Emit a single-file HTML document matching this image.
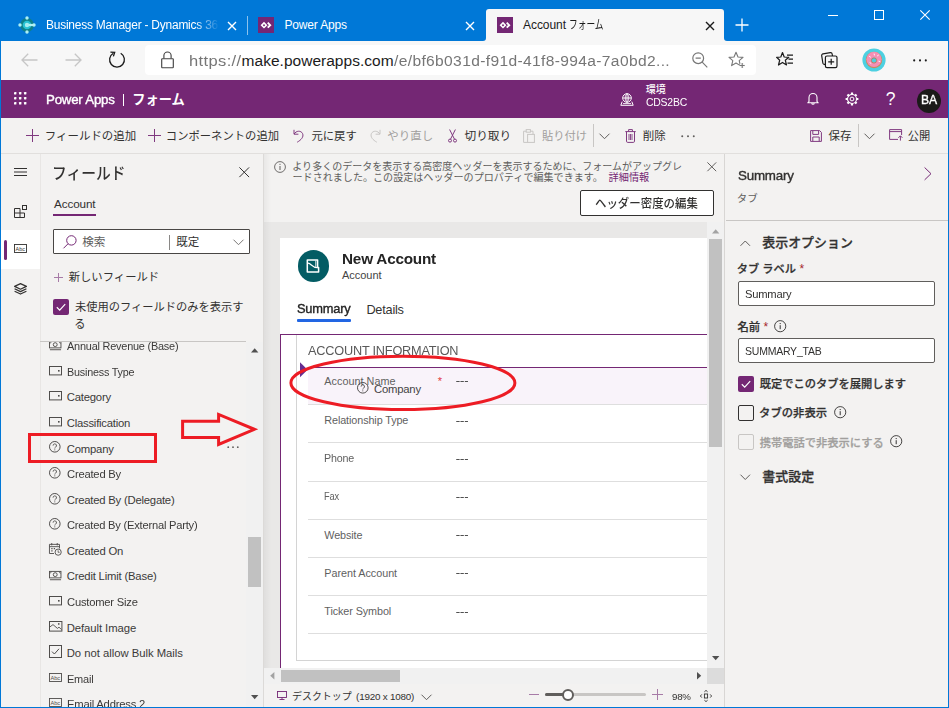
<!DOCTYPE html>
<html lang="ja"><head><meta charset="utf-8"><title>Account フォーム - Power Apps</title><style>
html,body{margin:0;padding:0;background:#0078d7;}
body{width:949px;height:708px;overflow:hidden;position:relative;font-family:"Liberation Sans",sans-serif;}
#w{position:absolute;left:0;top:0;width:949px;height:708px;overflow:hidden;}
.b,.t,.i,.j{position:absolute;}
.t{white-space:nowrap;}
.j,.i{overflow:visible;display:block;}
.jp{font-family:"Liberation Sans","Noto Sans CJK JP",sans-serif;}
</style></head><body><div id="w">
<div class="b" style="left:0px;top:0px;width:949px;height:708px;background:#0078d7;"></div>
<svg class="i" style="left:480px;top:9px" width="250" height="32" viewBox="480 9 250 32"><path d="M483 41 Q486 41 486 38 V12 Q486 9 489 9 H721 Q724 9 724 12 V38 Q724 41 727 41 Z" fill="#f7f7f7"/></svg>
<div class="b" style="left:1px;top:41px;width:947px;height:39px;background:#f7f7f7;"></div>
<svg class="i" style="left:18px;top:16px" width="18" height="18" viewBox="0 0 18 18" ><circle cx="9" cy="9" r="6.9" fill="#0e7f89"/><circle cx="9" cy="9" r="4.3" fill="#27c2d3"/><circle cx="9" cy="2" r="1.7" fill="#aef0f3"/><circle cx="9" cy="16" r="1.7" fill="#aef0f3"/><circle cx="2" cy="9" r="1.7" fill="#aef0f3"/><circle cx="16" cy="9" r="1.7" fill="#aef0f3"/><path d="M9 9 H16" stroke="#aef0f3" stroke-width="2.2"/><circle cx="9" cy="9" r="2.2" fill="#a5edf1"/></svg>
<div class="t" style="left:45.50px;top:16.10px;font-size:12px;line-height:18px;color:#ffffff;letter-spacing:-0.220px;transform:scaleX(0.9953);transform-origin:0 50%;width:174px;overflow:hidden;-webkit-mask-image:linear-gradient(90deg,#000 86%,transparent 100%);">Business Manager - Dynamics 36</div>
<svg class="i" style="left:227px;top:20.5px" width="10" height="10" viewBox="0 0 10 10" ><path d="M1 1 L9 9 M9 1 L1 9" stroke="#fff" stroke-width="1.4" fill="none"/></svg>
<div class="b" style="left:247px;top:16px;width:1px;height:19px;background:rgba(255,255,255,0.55);"></div>
<svg class="i" style="left:258px;top:17px" width="16" height="16" viewBox="0 0 16 16" ><rect width="16" height="16" fill="#742774"/><path d="M2.6 8.2 L6 4.8 L9.4 8.2 L6 11.6 Z M4.8 8.2 L6 9.4 L7.2 8.2 L6 7 Z" fill="#fff" fill-rule="evenodd"/><path d="M9.7 5.7 L12.2 8.2 L9.7 10.7" stroke="#fff" stroke-width="1.9" fill="none"/></svg>
<div class="t" style="left:284.40px;top:16.10px;font-size:12px;line-height:18px;color:#ffffff;letter-spacing:-0.154px;">Power Apps</div>
<svg class="i" style="left:465px;top:20.5px" width="10" height="10" viewBox="0 0 10 10" ><path d="M1 1 L9 9 M9 1 L1 9" stroke="#fff" stroke-width="1.4" fill="none"/></svg>
<svg class="i" style="left:497px;top:17px" width="16" height="16" viewBox="0 0 16 16" ><rect width="16" height="16" fill="#742774"/><path d="M2.6 8.2 L6 4.8 L9.4 8.2 L6 11.6 Z M4.8 8.2 L6 9.4 L7.2 8.2 L6 7 Z" fill="#fff" fill-rule="evenodd"/><path d="M9.7 5.7 L12.2 8.2 L9.7 10.7" stroke="#fff" stroke-width="1.9" fill="none"/></svg>
<div class="t" style="left:523.00px;top:16.10px;font-size:12px;line-height:18px;color:#1b1b1b;letter-spacing:-0.051px;">Account</div>
<div class="t jp" style="left:568.74px;top:17.26px;font-size:12px;line-height:16.8px;color:#1b1b1b;transform:scaleX(0.726);transform-origin:0 50%;">フォーム</div>
<svg class="i" style="left:704.5px;top:20.5px" width="10" height="10" viewBox="0 0 10 10" ><path d="M1 1 L9 9 M9 1 L1 9" stroke="#1b1b1b" stroke-width="1.4" fill="none"/></svg>
<svg class="i" style="left:735px;top:18px" width="14" height="14" viewBox="0 0 14 14" ><path d="M7 0.5 V13.5 M0.5 7 H13.5" stroke="#fff" stroke-width="1.3" fill="none"/></svg>
<div class="b" style="left:828px;top:15px;width:10px;height:1px;background:#fff;"></div>
<div class="b" style="left:874px;top:10px;width:10px;height:10px;border:1px solid #fff;box-sizing:border-box;"></div>
<svg class="i" style="left:920px;top:10px" width="10" height="10" viewBox="0 0 10 10" ><path d="M0.3 0.3 L9.7 9.7 M9.7 0.3 L0.3 9.7" stroke="#fff" stroke-width="1.1" fill="none"/></svg>
<svg class="i" style="left:21px;top:53px" width="17" height="14" viewBox="0 0 17 14" ><path d="M16.5 7 H1.2 M7.2 0.8 L1 7 L7.2 13.2" stroke="#c6c6c6" stroke-width="1.3" fill="none"/></svg>
<svg class="i" style="left:64.5px;top:53px" width="17" height="14" viewBox="0 0 17 14" ><path d="M0.5 7 H15.8 M9.8 0.8 L16 7 L9.8 13.2" stroke="#c6c6c6" stroke-width="1.3" fill="none"/></svg>
<svg class="i" style="left:108px;top:51px" width="18" height="18" viewBox="0 0 18 18" ><path d="M12.7 2.3 A7.4 7.4 0 1 1 5.3 2.3" stroke="#1b1b1b" stroke-width="1.3" fill="none"/><path d="M2.4 1.1 L6.7 1.3 L5.4 5.4" stroke="#1b1b1b" stroke-width="1.3" fill="none" stroke-linejoin="miter"/></svg>
<div class="b" style="left:145px;top:44.5px;width:611px;height:30.5px;background:#ffffff;border-radius:4px;"></div>
<svg class="i" style="left:161px;top:51px" width="13" height="18" viewBox="0 0 13 18" ><rect x="0.7" y="7.7" width="11.6" height="9" rx="0.6" stroke="#444" stroke-width="1.15" fill="none"/><path d="M2.9 7.5 V4.6 A3.6 3.6 0 0 1 10.1 4.6 V7.5" stroke="#444" stroke-width="1.15" fill="none"/></svg>
<div class="t" style="left:188.50px;top:49.13px;font-size:15.5px;line-height:23px;color:#767676;letter-spacing:0.350px;transform:scaleX(1.0644);transform-origin:0 50%;">https://</div>
<div class="t" style="left:241.60px;top:49.13px;font-size:15.5px;line-height:23px;color:#1b1b1b;letter-spacing:0.021px;">make.powerapps.com</div>
<div class="t" style="left:394.20px;top:49.13px;font-size:15.5px;line-height:23px;color:#767676;letter-spacing:0.350px;transform:scaleX(1.0051);transform-origin:0 50%;">/e/bf6b031d-f91d-41f8-994a-7a0bd2...</div>
<svg class="i" style="left:692px;top:52px" width="16" height="16" viewBox="0 0 16 16" ><circle cx="6.2" cy="6.2" r="5.4" stroke="#777" stroke-width="1.2" fill="none"/><path d="M10.2 10.2 L15.3 15.3 M3.6 6.2 H8.8" stroke="#777" stroke-width="1.2" fill="none"/></svg>
<svg class="i" style="left:728px;top:51px" width="18" height="18" viewBox="0 0 18 18" ><path d="M8 1.2 L10 6 L15 6.4 L11.2 9.7 L12.4 14.6 L8 12 L3.6 14.6 L4.8 9.7 L1 6.4 L6 6 Z" stroke="#777" stroke-width="1.1" fill="none" stroke-linejoin="round"/><path d="M14.2 12 V17 M11.7 14.5 H16.7" stroke="#f7f7f7" stroke-width="3.2"/><path d="M14.2 12 V17 M11.7 14.5 H16.7" stroke="#777" stroke-width="1.1"/></svg>
<svg class="i" style="left:776px;top:51px" width="18" height="18" viewBox="0 0 18 18" ><path d="M6.5 1.5 L8.2 6 L12.8 6.3 L9.3 9.2 L10.5 14 L6.5 11.4 L2.5 14 L3.7 9.2 L0.6 6.3 L4.8 6 Z" stroke="#1b1b1b" stroke-width="1.2" fill="none" stroke-linejoin="round"/><path d="M11 4.2 H17 M12.5 8.2 H17 M11.5 12.2 H17" stroke="#1b1b1b" stroke-width="1.2"/></svg>
<svg class="i" style="left:821px;top:51px" width="17" height="18" viewBox="0 0 17 18" ><rect x="1.2" y="2.2" width="10.6" height="10.6" rx="1.6" stroke="#1b1b1b" stroke-width="1.2" fill="none" transform="rotate(-9 6.5 7.5)"/><rect x="4.4" y="5" width="11.6" height="11.6" rx="1.6" stroke="#1b1b1b" stroke-width="1.2" fill="#f7f7f7"/><path d="M10.2 7.8 V13.8 M7.2 10.8 H13.2" stroke="#1b1b1b" stroke-width="1.2"/></svg>
<svg class="i" style="left:862px;top:48px" width="24" height="24" viewBox="0 0 24 24" ><circle cx="12" cy="12" r="11.6" fill="#4dd0e1"/><circle cx="12" cy="12" r="8.2" fill="#c98a5a"/><circle cx="12" cy="11.3" r="7.6" fill="#f58fb5"/><circle cx="12" cy="12" r="2.6" fill="#4dd0e1"/><circle cx="12" cy="12.5" r="2.6" fill="none" stroke="#b87a4d" stroke-width="0.8"/><path d="M7.5 8.5 l1 .6 M15.5 7.8 l.9 -.6 M16.8 13.2 l1 .3 M8 14.8 l.9 .5 M12.2 6 l.2 1" stroke="#fff" stroke-width="0.9" stroke-linecap="round"/></svg>
<svg class="i" style="left:913px;top:58.6px" width="14" height="3" viewBox="0 0 14 3" ><circle cx="1.2" cy="1.4" r="1.05" fill="#1b1b1b"/><circle cx="7" cy="1.4" r="1.05" fill="#1b1b1b"/><circle cx="12.8" cy="1.4" r="1.05" fill="#1b1b1b"/></svg>
<div class="b" style="left:1px;top:80px;width:947px;height:37.5px;background:#742774;"></div>
<svg class="i" style="left:13.7px;top:92px" width="12.4" height="12.4" viewBox="0 0 12.4 12.4" ><rect x="0" y="0" width="2.4" height="2.4" rx="0.5" fill="#fff"/><rect x="0" y="5" width="2.4" height="2.4" rx="0.5" fill="#fff"/><rect x="0" y="10" width="2.4" height="2.4" rx="0.5" fill="#fff"/><rect x="5" y="0" width="2.4" height="2.4" rx="0.5" fill="#fff"/><rect x="5" y="5" width="2.4" height="2.4" rx="0.5" fill="#fff"/><rect x="5" y="10" width="2.4" height="2.4" rx="0.5" fill="#fff"/><rect x="10" y="0" width="2.4" height="2.4" rx="0.5" fill="#fff"/><rect x="10" y="5" width="2.4" height="2.4" rx="0.5" fill="#fff"/><rect x="10" y="10" width="2.4" height="2.4" rx="0.5" fill="#fff"/></svg>
<div class="t" style="left:46.30px;top:89.81px;font-size:13.5px;line-height:20px;color:#ffffff;-webkit-text-stroke:0.38px #ffffff;letter-spacing:-0.220px;transform:scaleX(0.9836);transform-origin:0 50%;">Power Apps</div>
<div class="b" style="left:122.6px;top:94px;width:1.8px;height:12.4px;background:#ffffff;"></div>
<div class="t jp" style="left:132.29px;top:90.83px;font-size:13.2px;line-height:18.7px;color:#ffffff;font-weight:bold;">フォーム</div>
<svg class="i" style="left:620px;top:93px" width="14" height="13" viewBox="0 0 14 13" ><circle cx="7" cy="5" r="4.3" stroke="#fff" stroke-width="1" fill="none"/><path d="M2.7 5 H11.3 M7 0.7 V9.3 M7 0.7 C4.6 2.6 4.6 7.4 7 9.3 M7 0.7 C9.4 2.6 9.4 7.4 7 9.3" stroke="#fff" stroke-width="0.9" fill="none"/><path d="M2.2 8.6 L0.8 12.3 H13.2 L11.8 8.6" stroke="#fff" stroke-width="1" fill="none"/><path d="M3 10.6 H11" stroke="#fff" stroke-width="0.9"/></svg>
<div class="t jp" style="left:645.71px;top:82.60px;font-size:10px;line-height:14px;color:#ffffff;font-weight:500;">環境</div>
<div class="t" style="left:646.00px;top:94.29px;font-size:10.56px;line-height:16px;color:#ffffff;letter-spacing:-0.220px;transform:scaleX(0.9875);transform-origin:0 50%;">CDS2BC</div>
<svg class="i" style="left:807px;top:92px" width="12" height="13" viewBox="0 0 12 13" ><path d="M2 9.5 V5.5 A4 4 0 0 1 10 5.5 V9.5 L11.2 10.8 H0.8 Z" stroke="#fff" stroke-width="1.1" fill="none" stroke-linejoin="round"/><path d="M4.6 11.2 A1.5 1.5 0 0 0 7.4 11.2" stroke="#fff" stroke-width="1.1" fill="none"/></svg>
<svg class="i" style="left:844.5px;top:91.5px" width="14" height="14" viewBox="0 0 14 14" ><circle cx="7" cy="7" r="4.5" stroke="#fff" stroke-width="1.1" fill="none"/><circle cx="7" cy="7" r="1.9" stroke="#fff" stroke-width="1" fill="none"/><path d="M11.60 7.00 L13.40 7.00 M10.25 10.25 L11.53 11.53 M7.00 11.60 L7.00 13.40 M3.75 10.25 L2.47 11.53 M2.40 7.00 L0.60 7.00 M3.75 3.75 L2.47 2.47 M7.00 2.40 L7.00 0.60 M10.25 3.75 L11.53 2.47" stroke="#fff" stroke-width="2.2"/></svg>
<div class="t" style="left:885.80px;top:86.35px;font-size:17.5px;line-height:26px;color:#ffffff;">?</div>
<div class="b" style="left:916.5px;top:88.5px;width:24px;height:24px;background:#1b1a19;border-radius:12px;"></div>
<div class="t" style="left:920.60px;top:91.21px;font-size:12.5px;line-height:19px;color:#ffffff;-webkit-text-stroke:0.35px #ffffff;letter-spacing:-0.220px;transform:scaleX(0.9732);transform-origin:0 50%;">BA</div>
<div class="b" style="left:1px;top:117.5px;width:947px;height:36px;background:#f3f2f1;"></div>
<div class="b" style="left:1px;top:153px;width:947px;height:1px;background:#e1dfdd;"></div>
<svg class="i" style="left:26px;top:129px" width="13" height="13" viewBox="0 0 13 13" ><path d="M6.5 0 V13 M0 6.5 H13" stroke="#803a80" stroke-width="1" fill="none"/></svg>
<div class="t jp" style="left:44.84px;top:127.81px;font-size:11.46px;line-height:16.3px;color:#323130;">フィールドの追加</div>
<svg class="i" style="left:148px;top:129px" width="13" height="13" viewBox="0 0 13 13" ><path d="M6.5 0 V13 M0 6.5 H13" stroke="#803a80" stroke-width="1" fill="none"/></svg>
<div class="t jp" style="left:165.80px;top:127.89px;font-size:11.33px;line-height:16.1px;color:#323130;">コンポーネントの追加</div>
<svg class="i" style="left:292.5px;top:128.5px" width="11" height="14" viewBox="0 0 11 14" ><path d="M1 0.8 V5.2 H5.4" stroke="#803a80" stroke-width="1" fill="none"/><path d="M1.2 5 C3 1.6 8 1.2 9.6 4.6 C11 8 8 11 4.2 13.2" stroke="#803a80" stroke-width="1" fill="none"/></svg>
<div class="t jp" style="left:311.46px;top:127.89px;font-size:11.34px;line-height:16.1px;color:#323130;">元に戻す</div>
<svg class="i" style="left:369px;top:128.5px" width="12" height="14" viewBox="0 0 12 14" ><path d="M11 0.8 V5.2 H6.6" stroke="#c8c6c4" stroke-width="1" fill="none"/><path d="M10.8 5 C9 1.6 4 1.2 2.4 4.6 C1 8 4 11 7.8 13.2" stroke="#c8c6c4" stroke-width="1" fill="none"/></svg>
<div class="t jp" style="left:387.31px;top:127.80px;font-size:11.46px;line-height:16.3px;color:#a19f9d;">やり直し</div>
<svg class="i" style="left:447.5px;top:128.5px" width="9" height="14" viewBox="0 0 9 14" ><path d="M1.6 0.5 L6.4 10 M7.4 0.5 L2.6 10" stroke="#803a80" stroke-width="1" fill="none"/><circle cx="2" cy="11.6" r="1.5" stroke="#803a80" stroke-width="1" fill="none"/><circle cx="7" cy="11.6" r="1.5" stroke="#803a80" stroke-width="1" fill="none"/></svg>
<div class="t jp" style="left:464.46px;top:127.65px;font-size:11.69px;line-height:16.6px;color:#323130;">切り取り</div>
<svg class="i" style="left:522.5px;top:128.5px" width="12" height="14" viewBox="0 0 12 14" ><path d="M3.2 2.2 H0.6 V13.4 H4.6 M7.4 2.2 H10 V5" stroke="#c8c6c4" stroke-width="1" fill="none"/><rect x="3.2" y="0.6" width="4.2" height="2.6" stroke="#c8c6c4" stroke-width="1" fill="none"/><rect x="4.6" y="5.4" width="6.8" height="8" stroke="#c8c6c4" stroke-width="1" fill="none"/></svg>
<div class="t jp" style="left:541.93px;top:127.90px;font-size:11.31px;line-height:16.1px;color:#a19f9d;">貼り付け</div>
<div class="b" style="left:592.5px;top:124px;width:1px;height:23px;background:#c8c6c4;"></div>
<svg class="i" style="left:599.4px;top:133px" width="11" height="7" viewBox="0 0 11 7" ><path d="M0.5 0.7 L5.5 5.7 L10.5 0.7" stroke="#605e5c" stroke-width="1" fill="none"/></svg>
<svg class="i" style="left:624.5px;top:128.5px" width="11" height="14" viewBox="0 0 11 14" ><path d="M0.3 2.6 H10.7 M3.6 2.4 V0.6 H7.4 V2.4" stroke="#803a80" stroke-width="1" fill="none"/><path d="M1.5 2.8 V12.2 A1.2 1.2 0 0 0 2.7 13.4 H8.3 A1.2 1.2 0 0 0 9.5 12.2 V2.8" stroke="#803a80" stroke-width="1" fill="none"/><path d="M4 5 V11 M5.5 5 V11 M7 5 V11" stroke="#803a80" stroke-width="0.9"/></svg>
<div class="t jp" style="left:642.72px;top:127.78px;font-size:11.5px;line-height:16.3px;color:#323130;">削除</div>
<svg class="i" style="left:681px;top:135px" width="14" height="2.4" viewBox="0 0 14 2.4" ><circle cx="1.2" cy="1.2" r="1" fill="#605e5c"/><circle cx="7" cy="1.2" r="1" fill="#605e5c"/><circle cx="12.8" cy="1.2" r="1" fill="#605e5c"/></svg>
<svg class="i" style="left:810px;top:129.5px" width="12" height="12" viewBox="0 0 12 12" ><path d="M0.6 0.6 H9.6 L11.4 2.4 V11.4 H0.6 Z" stroke="#803a80" stroke-width="1" fill="none"/><path d="M2.8 0.8 V4.4 H8.6 V0.8 M2.8 11.2 V7 H9.2 V11.2" stroke="#803a80" stroke-width="1" fill="none"/></svg>
<div class="t jp" style="left:828.54px;top:127.79px;font-size:11.48px;line-height:16.3px;color:#323130;">保存</div>
<div class="b" style="left:857.5px;top:124px;width:1px;height:23px;background:#c8c6c4;"></div>
<svg class="i" style="left:864.4px;top:133px" width="11" height="7" viewBox="0 0 11 7" ><path d="M0.5 0.7 L5.5 5.7 L10.5 0.7" stroke="#605e5c" stroke-width="1" fill="none"/></svg>
<svg class="i" style="left:889px;top:129px" width="14" height="12" viewBox="0 0 14 12" ><path d="M9 10.4 H0.6 V0.6 H12.6 V6" stroke="#803a80" stroke-width="1" fill="none"/><path d="M0.6 2.6 H12.6" stroke="#803a80" stroke-width="1"/><path d="M11.4 11.6 V7 M9.4 8.8 L11.4 6.8 L13.4 8.8" stroke="#803a80" stroke-width="1" fill="none"/></svg>
<div class="t jp" style="left:907.74px;top:127.94px;font-size:11.25px;line-height:16px;color:#323130;">公開</div>
<div class="b" style="left:1px;top:154px;width:947px;height:553px;background:#f3f2f1;"></div>
<div class="b" style="left:1px;top:154px;width:39px;height:553px;background:#f3f2f1;"></div>
<div class="b" style="left:40px;top:154px;width:224px;height:553px;background:#f3f2f1;"></div>
<div class="b" style="left:39.5px;top:154px;width:1px;height:553px;background:#e8e6e4;"></div>
<div class="b" style="left:263px;top:154px;width:1px;height:553px;background:#dcdad8;"></div>
<svg class="i" style="left:14px;top:167.5px" width="13" height="8" viewBox="0 0 13 8" ><path d="M0 0.5 H13 M0 4 H13 M0 7.5 H13" stroke="#323130" stroke-width="1"/></svg>
<svg class="i" style="left:14px;top:205px" width="13" height="13" viewBox="0 0 13 13" ><path d="M0.5 3.5 H6 V12.5 H0.5 Z M0.5 8 H6 M6 8 H10.5 V12.5 H6" stroke="#323130" stroke-width="1" fill="none"/><rect x="8.5" y="0.5" width="4" height="4" stroke="#323130" stroke-width="1" fill="none"/></svg>
<div class="b" style="left:1px;top:230px;width:38.5px;height:39px;background:#ffffff;"></div>
<div class="b" style="left:4px;top:240px;width:3px;height:19.5px;background:#742774;border-radius:1.5px;"></div>
<svg class="i" style="left:13.8px;top:243.7px" width="13" height="9" viewBox="0 0 13 9" ><rect x="0.5" y="0.5" width="12" height="8" stroke="#323130" stroke-width="0.9" fill="none"/><text x="1.6" y="6.5" font-family="Liberation Sans, sans-serif" font-size="5.4" fill="#323130">Abc</text></svg>
<svg class="i" style="left:14px;top:282.5px" width="13" height="12" viewBox="0 0 13 12" ><path d="M6.5 0.6 L12.4 3.4 L6.5 6.2 L0.6 3.4 Z" stroke="#323130" stroke-width="1.25" fill="none" stroke-linejoin="round"/><path d="M0.6 5.8 L6.5 8.6 L12.4 5.8 M0.6 8.2 L6.5 11 L12.4 8.2" stroke="#323130" stroke-width="1.25" fill="none" stroke-linejoin="round"/></svg>
<div class="t jp" style="left:51.95px;top:162.31px;font-size:16.4px;line-height:23px;color:#323130;font-weight:500;transform:scaleX(0.899);transform-origin:0 50%;">フィールド</div>
<svg class="i" style="left:238.5px;top:166.5px" width="10.5" height="10.5" viewBox="0 0 10.5 10.5" ><path d="M0.4 0.4 L10.1 10.1 M10.1 0.4 L0.4 10.1" stroke="#323130" stroke-width="1" fill="none"/></svg>
<div class="t" style="left:54.00px;top:195.30px;font-size:11.7px;line-height:18px;color:#323130;letter-spacing:-0.111px;">Account</div>
<div class="b" style="left:53.2px;top:213.5px;width:42.6px;height:2px;background:#742774;"></div>
<div class="b" style="left:53px;top:229px;width:197px;height:25px;background:#ffffff;border:1px solid #484644;border-radius:1px;box-sizing:border-box;"></div>
<svg class="i" style="left:63px;top:234.5px" width="14" height="14" viewBox="0 0 14 14" ><circle cx="8.4" cy="5.4" r="4.7" stroke="#742774" stroke-width="1" fill="none"/><path d="M5 8.8 L0.5 13.3" stroke="#742774" stroke-width="1"/></svg>
<div class="t jp" style="left:82.15px;top:233.60px;font-size:11.62px;line-height:16.5px;color:#605e5c;">検索</div>
<div class="b" style="left:168.8px;top:234.5px;width:1px;height:15.5px;background:#8a8886;"></div>
<div class="t jp" style="left:176.26px;top:233.71px;font-size:11.46px;line-height:16.3px;color:#323130;">既定</div>
<svg class="i" style="left:233px;top:238.5px" width="11" height="7" viewBox="0 0 11 7" ><path d="M0.5 0.7 L5.5 5.7 L10.5 0.7" stroke="#797775" stroke-width="1" fill="none"/></svg>
<svg class="i" style="left:53.5px;top:272.5px" width="9" height="9" viewBox="0 0 9 9" ><path d="M4.5 0 V9 M0 4.5 H9" stroke="#a77ba7" stroke-width="1"/></svg>
<div class="t jp" style="left:68.68px;top:269.28px;font-size:11.35px;line-height:16.1px;color:#323130;">新しいフィールド</div>
<div class="b" style="left:53px;top:299px;width:16px;height:16px;background:#742774;border-radius:2px;"></div>
<svg class="i" style="left:53px;top:299px" width="16" height="16" viewBox="0 0 16 16" ><path d="M3.8 8.3 L6.7 11.1 L12.2 5.2" stroke="#fff" stroke-width="1.2" fill="none"/></svg>
<div class="t jp" style="left:75.02px;top:299.15px;font-size:11.25px;line-height:16px;color:#323130;">未使用のフィールドのみを表示す</div>
<div class="t jp" style="left:74.14px;top:315.56px;font-size:11.23px;line-height:16px;color:#323130;">る</div>
<div class="b" style="left:40px;top:340.7px;width:206px;height:1px;background:#c8c6c4;"></div>
<div class="b" style="left:40px;top:341.5px;width:206px;height:365.5px;overflow:hidden">
<svg class="i" style="left:9.3px;top:-1.75px" width="13" height="10.2" viewBox="0 0 14 11" ><rect x="0.5" y="1.5" width="12.4" height="7" stroke="#4f4d4b" fill="none"/><circle cx="6.7" cy="5" r="2.1" stroke="#4f4d4b" fill="none"/><path d="M1 10.5 H13" stroke="#4f4d4b"/><path d="M0.5 3.5 Q2.5 3.5 2.5 1.5 M12.9 3.5 Q10.9 3.5 10.9 1.5" stroke="#4f4d4b" stroke-width="0.8" fill="none"/></svg>
<div class="t" style="left:26.70px;top:-3.20px;font-size:11.3px;line-height:17px;color:#3b3a39;letter-spacing:-0.220px;transform:scaleX(0.9657);transform-origin:0 50%;">Annual Revenue (Base)</div>
<svg class="i" style="left:9px;top:24.02px" width="13" height="10" viewBox="0 0 13 10" ><rect x="0.5" y="0.5" width="12" height="8.4" stroke="#4f4d4b" fill="none"/><rect x="9" y="4" width="1.6" height="1.6" fill="#4f4d4b"/></svg>
<div class="t" style="left:26.70px;top:22.37px;font-size:11.3px;line-height:17px;color:#3b3a39;letter-spacing:-0.220px;transform:scaleX(0.9556);transform-origin:0 50%;">Business Type</div>
<svg class="i" style="left:9px;top:49.59px" width="13" height="10" viewBox="0 0 13 10" ><rect x="0.5" y="0.5" width="12" height="8.4" stroke="#4f4d4b" fill="none"/><rect x="9" y="4" width="1.6" height="1.6" fill="#4f4d4b"/></svg>
<div class="t" style="left:26.70px;top:47.94px;font-size:11.3px;line-height:17px;color:#3b3a39;letter-spacing:-0.194px;">Category</div>
<svg class="i" style="left:9px;top:75.16px" width="13" height="10" viewBox="0 0 13 10" ><rect x="0.5" y="0.5" width="12" height="8.4" stroke="#4f4d4b" fill="none"/><rect x="9" y="4" width="1.6" height="1.6" fill="#4f4d4b"/></svg>
<div class="t" style="left:26.70px;top:73.51px;font-size:11.3px;line-height:17px;color:#3b3a39;letter-spacing:-0.219px;">Classification</div>
<svg class="i" style="left:9.4px;top:99.93px" width="11.6" height="11.6" viewBox="0 0 13 13" ><circle cx="6.5" cy="6.5" r="5.95" stroke="#4f4d4b" stroke-width="1.1" fill="none"/><path d="M4.6 5.2 A1.9 1.9 0 1 1 7.4 6.8 C6.7 7.3 6.5 7.6 6.5 8.4" stroke="#4f4d4b" stroke-width="1" fill="none"/><rect x="6" y="9.4" width="1" height="1.1" fill="#4f4d4b"/></svg>
<div class="t" style="left:26.70px;top:99.08px;font-size:11.3px;line-height:17px;color:#3b3a39;letter-spacing:-0.195px;">Company</div>
<svg class="i" style="left:9.4px;top:125.5px" width="11.6" height="11.6" viewBox="0 0 13 13" ><circle cx="6.5" cy="6.5" r="5.95" stroke="#4f4d4b" stroke-width="1.1" fill="none"/><path d="M4.6 5.2 A1.9 1.9 0 1 1 7.4 6.8 C6.7 7.3 6.5 7.6 6.5 8.4" stroke="#4f4d4b" stroke-width="1" fill="none"/><rect x="6" y="9.4" width="1" height="1.1" fill="#4f4d4b"/></svg>
<div class="t" style="left:26.70px;top:124.65px;font-size:11.3px;line-height:17px;color:#3b3a39;letter-spacing:-0.220px;transform:scaleX(0.9940);transform-origin:0 50%;">Created By</div>
<svg class="i" style="left:9.4px;top:151.07px" width="11.6" height="11.6" viewBox="0 0 13 13" ><circle cx="6.5" cy="6.5" r="5.95" stroke="#4f4d4b" stroke-width="1.1" fill="none"/><path d="M4.6 5.2 A1.9 1.9 0 1 1 7.4 6.8 C6.7 7.3 6.5 7.6 6.5 8.4" stroke="#4f4d4b" stroke-width="1" fill="none"/><rect x="6" y="9.4" width="1" height="1.1" fill="#4f4d4b"/></svg>
<div class="t" style="left:26.70px;top:150.22px;font-size:11.3px;line-height:17px;color:#3b3a39;letter-spacing:-0.220px;">Created By (Delegate)</div>
<svg class="i" style="left:9.4px;top:176.64px" width="11.6" height="11.6" viewBox="0 0 13 13" ><circle cx="6.5" cy="6.5" r="5.95" stroke="#4f4d4b" stroke-width="1.1" fill="none"/><path d="M4.6 5.2 A1.9 1.9 0 1 1 7.4 6.8 C6.7 7.3 6.5 7.6 6.5 8.4" stroke="#4f4d4b" stroke-width="1" fill="none"/><rect x="6" y="9.4" width="1" height="1.1" fill="#4f4d4b"/></svg>
<div class="t" style="left:26.70px;top:175.79px;font-size:11.3px;line-height:17px;color:#3b3a39;letter-spacing:-0.220px;transform:scaleX(0.9870);transform-origin:0 50%;">Created By (External Party)</div>
<svg class="i" style="left:9.3px;top:201.61px" width="12.8" height="12.8" viewBox="0 0 14 14" ><path d="M5.5 11.5 H0.5 V1.5 H11.5 V6" stroke="#4f4d4b" fill="none"/><path d="M0.5 4 H11.5 M3 0 V2.6 M9 0 V2.6" stroke="#4f4d4b"/><path d="M2.5 6.2 h1.4 M5.2 6.2 h1.4 M2.5 8.6 h1.4" stroke="#4f4d4b" stroke-width="1.2"/><circle cx="10" cy="10" r="3.4" stroke="#4f4d4b" fill="#f3f2f1"/><path d="M10 8 V10.2 H11.6" stroke="#4f4d4b" stroke-width="0.9" fill="none"/></svg>
<div class="t" style="left:26.70px;top:201.36px;font-size:11.3px;line-height:17px;color:#3b3a39;letter-spacing:-0.191px;">Created On</div>
<svg class="i" style="left:9.3px;top:228.38px" width="13" height="10.2" viewBox="0 0 14 11" ><rect x="0.5" y="1.5" width="12.4" height="7" stroke="#4f4d4b" fill="none"/><circle cx="6.7" cy="5" r="2.1" stroke="#4f4d4b" fill="none"/><path d="M1 10.5 H13" stroke="#4f4d4b"/><path d="M0.5 3.5 Q2.5 3.5 2.5 1.5 M12.9 3.5 Q10.9 3.5 10.9 1.5" stroke="#4f4d4b" stroke-width="0.8" fill="none"/></svg>
<div class="t" style="left:26.70px;top:226.93px;font-size:11.3px;line-height:17px;color:#3b3a39;letter-spacing:-0.193px;">Credit Limit (Base)</div>
<svg class="i" style="left:9px;top:254.15px" width="13" height="10" viewBox="0 0 13 10" ><rect x="0.5" y="0.5" width="12" height="8.4" stroke="#4f4d4b" fill="none"/><rect x="9" y="4" width="1.6" height="1.6" fill="#4f4d4b"/></svg>
<div class="t" style="left:26.70px;top:252.50px;font-size:11.3px;line-height:17px;color:#3b3a39;letter-spacing:-0.220px;transform:scaleX(0.9924);transform-origin:0 50%;">Customer Size</div>
<svg class="i" style="left:9px;top:279.22px" width="14" height="11" viewBox="0 0 14 11" ><rect x="0.5" y="0.5" width="12.4" height="9.6" stroke="#4f4d4b" fill="none"/><path d="M0.8 6 L4 3.6 L8.4 7.4 L10 6.2 L12.6 8.6" stroke="#4f4d4b" stroke-width="0.9" fill="none"/><rect x="9" y="2.2" width="1.5" height="1.5" fill="#4f4d4b"/></svg>
<div class="t" style="left:26.70px;top:278.07px;font-size:11.3px;line-height:17px;color:#3b3a39;letter-spacing:-0.065px;">Default Image</div>
<svg class="i" style="left:9px;top:303.79px" width="13" height="13" viewBox="0 0 13 13" ><rect x="0.5" y="0.5" width="12" height="12" stroke="#4f4d4b" fill="none"/><path d="M3 6.6 L5.4 9 L10 3.8" stroke="#4f4d4b" stroke-width="1" fill="none"/></svg>
<div class="t" style="left:26.70px;top:303.64px;font-size:11.3px;line-height:17px;color:#3b3a39;letter-spacing:-0.022px;">Do not allow Bulk Mails</div>
<svg class="i" style="left:9px;top:331.36px" width="13" height="9" viewBox="0 0 13 9" ><rect x="0.5" y="0.5" width="12" height="8" stroke="#4f4d4b" stroke-width="0.9" fill="none"/><text x="1.5" y="6.6" font-family="Liberation Sans, sans-serif" font-size="5.6" fill="#4f4d4b">Abc</text></svg>
<div class="t" style="left:26.70px;top:329.21px;font-size:11.3px;line-height:17px;color:#3b3a39;letter-spacing:-0.220px;transform:scaleX(0.9722);transform-origin:0 50%;">Email</div>
<svg class="i" style="left:9px;top:356.93px" width="13" height="9" viewBox="0 0 13 9" ><rect x="0.5" y="0.5" width="12" height="8" stroke="#4f4d4b" stroke-width="0.9" fill="none"/><text x="1.5" y="6.6" font-family="Liberation Sans, sans-serif" font-size="5.6" fill="#4f4d4b">Abc</text></svg>
<div class="t" style="left:26.70px;top:354.78px;font-size:11.3px;line-height:17px;color:#3b3a39;letter-spacing:-0.220px;transform:scaleX(0.9955);transform-origin:0 50%;">Email Address 2</div>
</div>
<svg class="i" style="left:226.5px;top:446.3px" width="12" height="2.4" viewBox="0 0 12 2.4" ><circle cx="1.2" cy="1.2" r="0.9" fill="#605e5c"/><circle cx="6" cy="1.2" r="0.9" fill="#605e5c"/><circle cx="10.8" cy="1.2" r="0.9" fill="#605e5c"/></svg>
<div class="b" style="left:246.2px;top:341.5px;width:16.8px;height:365.5px;background:#f1f1f1;"></div>
<svg class="i" style="left:251px;top:348px" width="7.4" height="4.4" viewBox="0 0 7.4 4.4" ><path d="M0 4.4 L3.7 0.2 L7.4 4.4 Z" fill="#505050"/></svg>
<svg class="i" style="left:251px;top:695px" width="7.4" height="4.4" viewBox="0 0 7.4 4.4" ><path d="M0 0 L3.7 4.2 L7.4 0 Z" fill="#505050"/></svg>
<div class="b" style="left:248.2px;top:537.2px;width:12.7px;height:49.7px;background:#c1c1c1;"></div>
<div class="b" style="left:28px;top:433px;width:129px;height:29.5px;border:3px solid #ed1c24;box-sizing:border-box;"></div>
<svg class="i" style="left:175px;top:405px" width="90" height="50" viewBox="0 0 90 50" ><path d="M7.6 16.3 H43.6 V9.4 L79.4 24.3 L43.6 39.4 V32.5 H7.6 Z" stroke="#ed1c24" stroke-width="3" fill="none" stroke-linejoin="miter"/></svg>
<div class="b" style="left:264px;top:154px;width:461px;height:68px;background:#f3f2f1;"></div>
<svg class="i" style="left:273.7px;top:161px" width="12" height="12" viewBox="0 0 12 12" ><circle cx="6" cy="6" r="5.4" stroke="#605e5c" stroke-width="0.9" fill="none"/><path d="M6 5 V9" stroke="#605e5c" stroke-width="1"/><rect x="5.5" y="2.8" width="1" height="1.1" fill="#605e5c"/></svg>
<div class="t jp" style="left:292.30px;top:159.59px;font-size:10.02px;line-height:14.2px;color:#605e5c;">より多くのデータを表示する高密度ヘッダーを表示するために、フォームがアップグレ</div>
<div class="t jp" style="left:292.55px;top:171.15px;font-size:10.07px;line-height:14.3px;color:#605e5c;">ードされました。この設定はヘッダーのプロパティで編集できます。</div>
<div class="t jp" style="left:608.61px;top:171.08px;font-size:10.17px;line-height:14.5px;color:#742774;">詳細情報</div>
<svg class="i" style="left:707px;top:161.7px" width="9.6" height="9.6" viewBox="0 0 9.6 9.6" ><path d="M0.4 0.4 L9.2 9.2 M9.2 0.4 L0.4 9.2" stroke="#605e5c" stroke-width="1" fill="none"/></svg>
<div class="b" style="left:580px;top:190px;width:134px;height:26px;background:#ffffff;border:1px solid #323130;border-radius:2px;box-sizing:border-box;"></div>
<div class="t jp" style="left:595.38px;top:195.76px;font-size:12px;line-height:16.8px;color:#323130;font-weight:500;transform:scaleX(0.953);transform-origin:0 50%;">ヘッダー密度の編集</div>
<div class="b" style="left:264px;top:222px;width:443px;height:446px;background:#e9e8e7;"></div>
<div class="b" style="left:264px;top:154px;width:7px;height:553px;background:linear-gradient(90deg,rgba(0,0,0,0.045),rgba(0,0,0,0));"></div>
<div class="b" style="left:280px;top:238px;width:427px;height:430px;background:#ffffff;"></div>
<div class="b" style="left:297.6px;top:250.4px;width:31.4px;height:31.4px;background:#035c64;border-radius:16px;"></div>
<svg class="i" style="left:306px;top:259px" width="14" height="14" viewBox="0 0 14 14" ><path d="M1.3 1 H11.6 V8.4 H12.6 V13 H1.3 Z" stroke="#fff" stroke-width="1.5" fill="none" stroke-linejoin="round"/><path d="M2 4.2 C5.4 4.2 5.6 8.6 11.6 8.6" stroke="#fff" stroke-width="1.2" fill="none"/><path d="M9.8 1.6 V7.8" stroke="#fff" stroke-width="0.9" fill="none"/></svg>
<div class="t" style="left:342.00px;top:247.23px;font-size:15.5px;line-height:23px;color:#242424;font-weight:bold;letter-spacing:-0.220px;transform:scaleX(0.9876);transform-origin:0 50%;">New Account</div>
<div class="t" style="left:342.00px;top:267.39px;font-size:11px;line-height:16px;color:#444444;letter-spacing:-0.021px;">Account</div>
<div class="t" style="left:297.00px;top:299.41px;font-size:13.07px;line-height:20px;color:#242424;-webkit-text-stroke:0.37px #242424;letter-spacing:-0.220px;transform:scaleX(0.9839);transform-origin:0 50%;">Summary</div>
<div class="b" style="left:297px;top:319px;width:53.5px;height:2.5px;background:#2266e3;border-radius:1px;"></div>
<div class="t" style="left:366.40px;top:299.91px;font-size:12.72px;line-height:19px;color:#333333;letter-spacing:-0.220px;">Details</div>
<div class="b" style="left:280px;top:334px;width:427px;height:1px;background:#742774;"></div>
<div class="b" style="left:280px;top:334px;width:1px;height:334px;background:#742774;"></div>
<div class="b" style="left:296px;top:335px;width:1px;height:325.5px;background:#d4d4d4;"></div>
<div class="b" style="left:296px;top:659.8px;width:411px;height:1px;background:#d4d4d4;"></div>
<div class="t" style="left:308.30px;top:341.21px;font-size:12.96px;line-height:19px;color:#5a5a5a;letter-spacing:-0.220px;transform:scaleX(0.9829);transform-origin:0 50%;">ACCOUNT INFORMATION</div>
<div class="b" style="left:308px;top:367.6px;width:399px;height:36px;background:#f9f3fa;"></div>
<div class="b" style="left:308px;top:366.8px;width:399px;height:1px;background:#742774;"></div>
<svg class="i" style="left:300px;top:361.5px" width="8" height="16" viewBox="0 0 8 16" ><path d="M0 0.3 L7.6 7.8 L0 15.3 Z" fill="#652d90"/></svg>
<div class="b" style="left:308px;top:403.5px;width:399px;height:1px;background:#dedede;"></div>
<div class="b" style="left:308px;top:441.9px;width:399px;height:1px;background:#dedede;"></div>
<div class="b" style="left:308px;top:480.5px;width:399px;height:1px;background:#dedede;"></div>
<div class="b" style="left:308px;top:518.5px;width:399px;height:1px;background:#dedede;"></div>
<div class="b" style="left:308px;top:556.7px;width:399px;height:1px;background:#dedede;"></div>
<div class="b" style="left:308px;top:594.9px;width:399px;height:1px;background:#dedede;"></div>
<div class="b" style="left:308px;top:633px;width:399px;height:1px;background:#dedede;"></div>
<div class="t" style="left:324.30px;top:373.09px;font-size:10.8px;line-height:16px;color:#5f5f5f;letter-spacing:0.039px;">Account Name</div>
<div class="t" style="left:455.90px;top:372.49px;font-size:11px;line-height:16px;color:#444444;-webkit-text-stroke:0.31px #444444;letter-spacing:0.350px;transform:scaleX(1.0466);transform-origin:0 50%;">---</div>
<div class="t" style="left:324.30px;top:412.19px;font-size:10.8px;line-height:16px;color:#5f5f5f;letter-spacing:-0.097px;">Relationship Type</div>
<div class="t" style="left:455.90px;top:411.59px;font-size:11px;line-height:16px;color:#444444;-webkit-text-stroke:0.31px #444444;letter-spacing:0.350px;transform:scaleX(1.0466);transform-origin:0 50%;">---</div>
<div class="t" style="left:324.30px;top:450.39px;font-size:10.8px;line-height:16px;color:#5f5f5f;letter-spacing:-0.220px;transform:scaleX(0.9924);transform-origin:0 50%;">Phone</div>
<div class="t" style="left:455.90px;top:449.79px;font-size:11px;line-height:16px;color:#444444;-webkit-text-stroke:0.31px #444444;letter-spacing:0.350px;transform:scaleX(1.0466);transform-origin:0 50%;">---</div>
<div class="t" style="left:324.30px;top:488.49px;font-size:10.8px;line-height:16px;color:#5f5f5f;letter-spacing:-0.220px;transform:scaleX(0.8591);transform-origin:0 50%;">Fax</div>
<div class="t" style="left:455.90px;top:487.89px;font-size:11px;line-height:16px;color:#444444;-webkit-text-stroke:0.31px #444444;letter-spacing:0.350px;transform:scaleX(1.0466);transform-origin:0 50%;">---</div>
<div class="t" style="left:324.30px;top:526.79px;font-size:10.8px;line-height:16px;color:#5f5f5f;letter-spacing:-0.103px;">Website</div>
<div class="t" style="left:455.90px;top:526.19px;font-size:11px;line-height:16px;color:#444444;-webkit-text-stroke:0.31px #444444;letter-spacing:0.350px;transform:scaleX(1.0466);transform-origin:0 50%;">---</div>
<div class="t" style="left:324.30px;top:564.99px;font-size:10.8px;line-height:16px;color:#5f5f5f;letter-spacing:-0.032px;">Parent Account</div>
<div class="t" style="left:455.90px;top:564.39px;font-size:11px;line-height:16px;color:#444444;-webkit-text-stroke:0.31px #444444;letter-spacing:0.350px;transform:scaleX(1.0466);transform-origin:0 50%;">---</div>
<div class="t" style="left:324.30px;top:603.19px;font-size:10.8px;line-height:16px;color:#5f5f5f;letter-spacing:-0.086px;">Ticker Symbol</div>
<div class="t" style="left:455.90px;top:602.59px;font-size:11px;line-height:16px;color:#444444;-webkit-text-stroke:0.31px #444444;letter-spacing:0.350px;transform:scaleX(1.0466);transform-origin:0 50%;">---</div>
<div class="t" style="left:437.80px;top:373.09px;font-size:11px;line-height:16px;color:#e0393e;">*</div>
<svg class="i" style="left:356.6px;top:381.6px" width="11.6" height="11.6" viewBox="0 0 13 13" ><circle cx="6.5" cy="6.5" r="5.95" stroke="#4f4d4b" stroke-width="1.1" fill="none"/><path d="M4.6 5.2 A1.9 1.9 0 1 1 7.4 6.8 C6.7 7.3 6.5 7.6 6.5 8.4" stroke="#4f4d4b" stroke-width="1" fill="none"/><rect x="6" y="9.4" width="1" height="1.1" fill="#4f4d4b"/></svg>
<div class="t" style="left:374.00px;top:381.30px;font-size:11.3px;line-height:17px;color:#444444;letter-spacing:-0.220px;">Company</div>
<svg class="i" style="left:285px;top:350px" width="240" height="66" viewBox="0 0 240 66" ><ellipse cx="117.9" cy="32.9" rx="112" ry="26.7" stroke="#ed1c24" stroke-width="3" fill="none"/></svg>
<div class="b" style="left:707.3px;top:222px;width:17px;height:446px;background:#f1f1f1;"></div>
<svg class="i" style="left:712px;top:229px" width="7.4" height="4.4" viewBox="0 0 7.4 4.4" ><path d="M0 4.4 L3.7 0.2 L7.4 4.4 Z" fill="#a3a3a3"/></svg>
<div class="b" style="left:709.3px;top:239px;width:12.5px;height:207.5px;background:#c1c1c1;"></div>
<svg class="i" style="left:711.8px;top:655.8px" width="7.4" height="4.4" viewBox="0 0 7.4 4.4" ><path d="M0 0 L3.7 4.2 L7.4 0 Z" fill="#505050"/></svg>
<div class="b" style="left:264px;top:668px;width:443px;height:16px;background:#f1f1f1;"></div>
<svg class="i" style="left:270px;top:672px" width="4.4" height="7.4" viewBox="0 0 4.4 7.4" ><path d="M4.4 0 L0.2 3.7 L4.4 7.4 Z" fill="#a3a3a3"/></svg>
<div class="b" style="left:281px;top:669.5px;width:119px;height:12px;background:#c1c1c1;"></div>
<svg class="i" style="left:697px;top:672px" width="4.4" height="7.4" viewBox="0 0 4.4 7.4" ><path d="M0 0 L4.2 3.7 L0 7.4 Z" fill="#505050"/></svg>
<div class="b" style="left:707.3px;top:667.5px;width:17px;height:16.3px;background:#dcdcdc;"></div>
<div class="b" style="left:264px;top:683.8px;width:461px;height:23.2px;background:#f3f2f1;"></div>
<svg class="i" style="left:277px;top:691px" width="10" height="10" viewBox="0 0 10 10" ><rect x="0.5" y="0.5" width="9" height="6" stroke="#742774" stroke-width="0.9" fill="none"/><path d="M2.5 8.5 H7.5 M5 6.5 V8.5" stroke="#742774" stroke-width="0.9"/></svg>
<div class="t jp" style="left:292.05px;top:689.63px;font-size:9.95px;line-height:14.1px;color:#323130;">デスクトップ</div>
<div class="t" style="left:356.10px;top:689.28px;font-size:9.86px;line-height:15px;color:#323130;letter-spacing:-0.203px;">(1920 x 1080)</div>
<svg class="i" style="left:420.5px;top:693.5px" width="11" height="7" viewBox="0 0 11 7" ><path d="M0.5 0.7 L5.5 5.7 L10.5 0.7" stroke="#605e5c" stroke-width="1" fill="none"/></svg>
<div class="b" style="left:529px;top:694px;width:9.5px;height:1px;background:#a77ba7;"></div>
<div class="b" style="left:545px;top:693.2px;width:100.5px;height:3.2px;background:#c8c6c4;border-radius:2px;"></div>
<div class="b" style="left:545px;top:693.2px;width:20px;height:3.2px;background:#605e5c;border-radius:2px;"></div>
<div class="b" style="left:561.6px;top:688.8px;width:12px;height:12px;background:#ffffff;border:2px solid #605e5c;border-radius:6px;box-sizing:border-box;"></div>
<svg class="i" style="left:652px;top:689px" width="11" height="11" viewBox="0 0 11 11" ><path d="M5.5 0 V11 M0 5.5 H11" stroke="#a77ba7" stroke-width="1"/></svg>
<div class="t" style="left:671.60px;top:688.98px;font-size:9.82px;line-height:15px;color:#323130;letter-spacing:-0.220px;transform:scaleX(0.9898);transform-origin:0 50%;">98%</div>
<svg class="i" style="left:700px;top:689.5px" width="12" height="12" viewBox="0 0 12 12" ><rect x="4.4" y="4" width="3.2" height="4" stroke="#323130" stroke-width="0.9" fill="none"/><path d="M4.4 1.8 L6 0.4 L7.6 1.8 M4.4 10.2 L6 11.6 L7.6 10.2 M1.8 4.4 L0.4 6 L1.8 7.6 M10.2 4.4 L11.6 6 L10.2 7.6" stroke="#323130" stroke-width="0.9" fill="none"/></svg>
<div class="b" style="left:724.3px;top:154px;width:223.7px;height:553px;background:#f3f2f1;"></div>
<div class="b" style="left:724.3px;top:154px;width:0.9px;height:553px;background:#d8d6d4;"></div>
<div class="t" style="left:737.70px;top:165.72px;font-size:13.6px;line-height:20px;color:#323130;-webkit-text-stroke:0.38px #323130;letter-spacing:-0.220px;transform:scaleX(0.9833);transform-origin:0 50%;">Summary</div>
<svg class="i" style="left:924px;top:167px" width="8" height="13.4" viewBox="0 0 8 13.4" ><path d="M0.6 0.5 L7 6.7 L0.6 12.9" stroke="#742774" stroke-width="1" fill="none"/></svg>
<div class="t jp" style="left:736.74px;top:192.22px;font-size:10.41px;line-height:14.8px;color:#605e5c;">タブ</div>
<div class="b" style="left:725.5px;top:220px;width:222.5px;height:1px;background:#c8c6c4;"></div>
<svg class="i" style="left:739.5px;top:240px" width="10.5" height="6.5" viewBox="0 0 10.5 6.5" ><path d="M0.5 5.8 L5.25 1 L10 5.8" stroke="#605e5c" stroke-width="1" fill="none"/></svg>
<div class="t jp" style="left:762.30px;top:234.40px;font-size:12.94px;line-height:18.4px;color:#323130;font-weight:500;-webkit-text-stroke:0.29px #323130;">表示オプション</div>
<div class="t jp" style="left:736.82px;top:261.36px;font-size:11.23px;line-height:16px;color:#323130;font-weight:500;-webkit-text-stroke:0.25px #323130;">タブ ラベル</div>
<div class="t" style="left:799.50px;top:259.70px;font-size:12px;line-height:18px;color:#a4262c;">*</div>
<div class="b" style="left:738px;top:281px;width:197px;height:25px;background:#ffffff;border:1px solid #605e5c;border-radius:2px;box-sizing:border-box;"></div>
<div class="t" style="left:745.00px;top:286.20px;font-size:11.33px;line-height:17px;color:#323130;letter-spacing:-0.220px;transform:scaleX(0.9886);transform-origin:0 50%;">Summary</div>
<div class="t jp" style="left:737.38px;top:319.29px;font-size:11.34px;line-height:16.1px;color:#323130;font-weight:500;-webkit-text-stroke:0.25px #323130;">名前</div>
<div class="t" style="left:763.40px;top:317.70px;font-size:12px;line-height:18px;color:#a4262c;">*</div>
<svg class="i" style="left:774.2px;top:320.4px" width="12.4" height="12.4" viewBox="0 0 12.4 12.4" ><circle cx="6.2" cy="6.2" r="5.6" stroke="#323130" stroke-width="0.9" fill="none"/><path d="M6.2 5.2 V9.2" stroke="#323130" stroke-width="1"/><rect x="5.7" y="3" width="1" height="1.1" fill="#323130"/></svg>
<div class="b" style="left:738px;top:338.4px;width:197px;height:25px;background:#ffffff;border:1px solid #605e5c;border-radius:2px;box-sizing:border-box;"></div>
<div class="t" style="left:745.00px;top:343.49px;font-size:10.63px;line-height:16px;color:#323130;letter-spacing:-0.220px;transform:scaleX(0.9869);transform-origin:0 50%;">SUMMARY_TAB</div>
<div class="b" style="left:738px;top:376px;width:16px;height:16px;background:#742774;border-radius:2px;"></div>
<svg class="i" style="left:738px;top:376px" width="16" height="16" viewBox="0 0 16 16" ><path d="M3.8 8.3 L6.7 11.1 L12.2 5.2" stroke="#fff" stroke-width="1.2" fill="none"/></svg>
<div class="t jp" style="left:759.63px;top:376.33px;font-size:11.27px;line-height:16px;color:#323130;font-weight:500;-webkit-text-stroke:0.25px #323130;">既定でこのタブを展開します</div>
<div class="b" style="left:738px;top:405.2px;width:16px;height:16px;border:1px solid #323130;border-radius:2px;box-sizing:border-box;"></div>
<div class="t jp" style="left:759.12px;top:405.29px;font-size:11.34px;line-height:16.1px;color:#323130;font-weight:500;-webkit-text-stroke:0.25px #323130;">タブの非表示</div>
<svg class="i" style="left:833.6px;top:406.1px" width="12.4" height="12.4" viewBox="0 0 12.4 12.4" ><circle cx="6.2" cy="6.2" r="5.6" stroke="#323130" stroke-width="0.9" fill="none"/><path d="M6.2 5.2 V9.2" stroke="#323130" stroke-width="1"/><rect x="5.7" y="3" width="1" height="1.1" fill="#323130"/></svg>
<div class="b" style="left:738px;top:434px;width:16px;height:16px;border:1px solid #c8c6c4;border-radius:2px;box-sizing:border-box;"></div>
<div class="t jp" style="left:759.72px;top:434.53px;font-size:11.27px;line-height:16px;color:#a19f9d;font-weight:500;-webkit-text-stroke:0.25px #a19f9d;">携帯電話で非表示にする</div>
<svg class="i" style="left:889.5px;top:435.4px" width="12.4" height="12.4" viewBox="0 0 12.4 12.4" ><circle cx="6.2" cy="6.2" r="5.6" stroke="#323130" stroke-width="0.9" fill="none"/><path d="M6.2 5.2 V9.2" stroke="#323130" stroke-width="1"/><rect x="5.7" y="3" width="1" height="1.1" fill="#323130"/></svg>
<svg class="i" style="left:739.5px;top:473.5px" width="10.5" height="6.5" viewBox="0 0 10.5 6.5" ><path d="M0.5 0.7 L5.25 5.5 L10 0.7" stroke="#605e5c" stroke-width="1" fill="none"/></svg>
<div class="t jp" style="left:762.33px;top:468.40px;font-size:12.94px;line-height:18.4px;color:#323130;font-weight:500;-webkit-text-stroke:0.29px #323130;">書式設定</div>
<div class="b" style="left:0px;top:0px;width:1px;height:708px;background:#0078d7;"></div>
<div class="b" style="left:948px;top:0px;width:1px;height:708px;background:#0078d7;"></div>
</div></body></html>
